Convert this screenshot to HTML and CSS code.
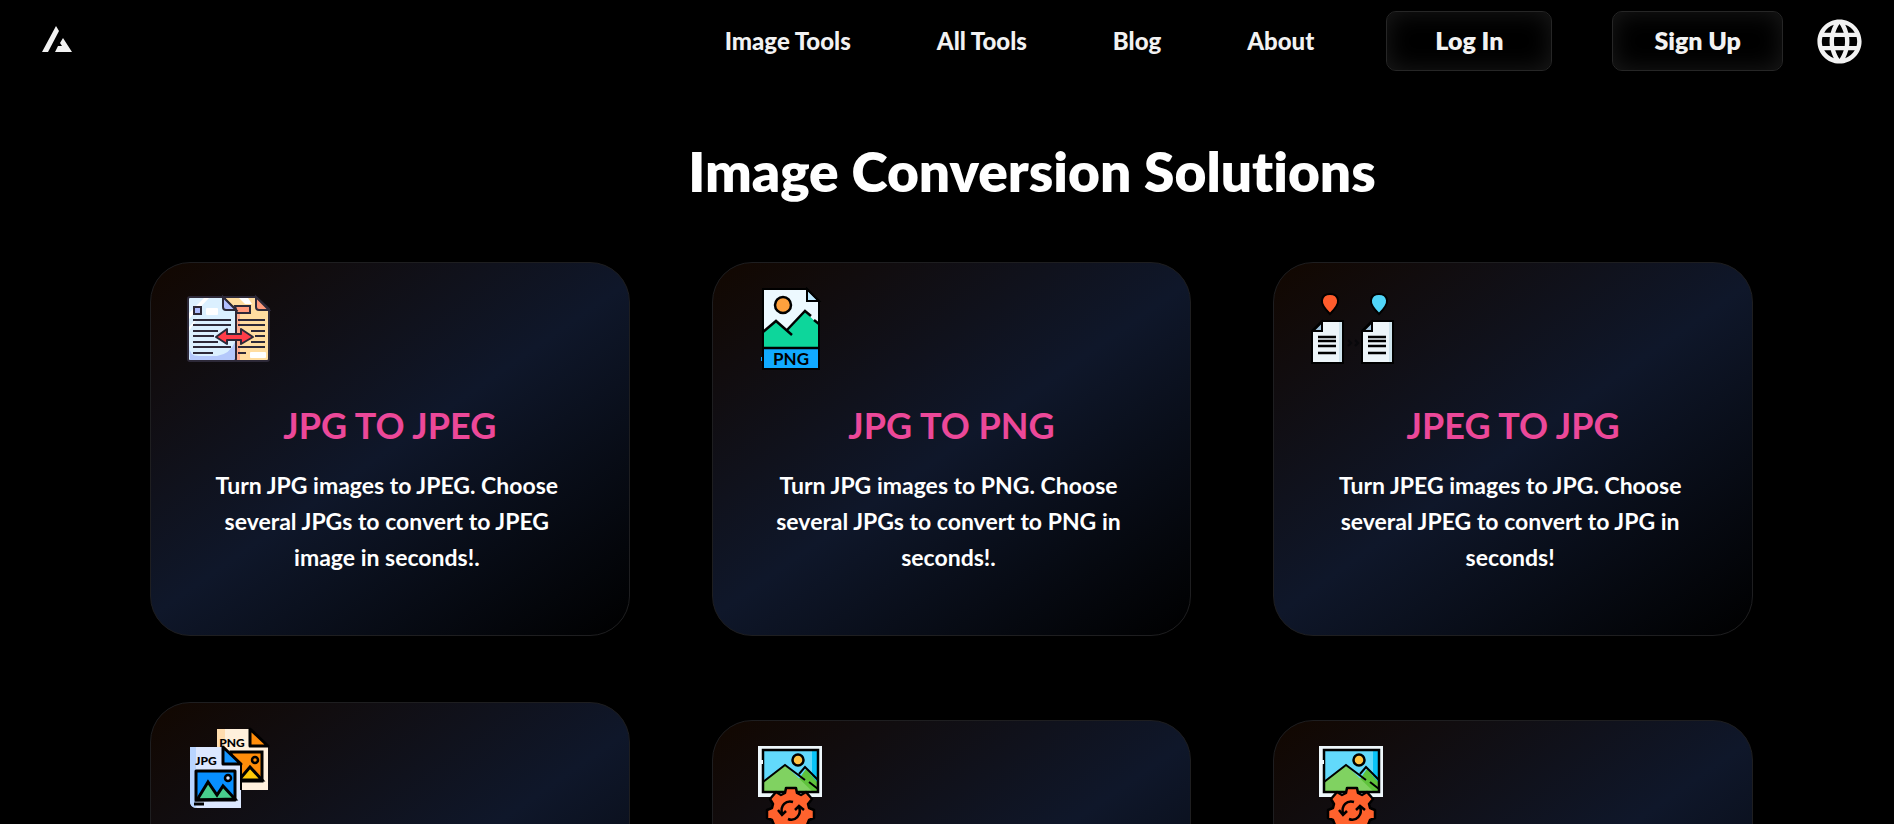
FILE: index.html
```html
<!DOCTYPE html>
<html lang="en">
<head>
<meta charset="UTF-8">
<meta name="viewport" content="width=device-width, initial-scale=1.0">
<title>Image Conversion Solutions</title>
<link rel="stylesheet" href="styles.css">
</head>
<body>

<!-- icons used more than once -->
<svg width="0" height="0" class="sprite">
    <symbol id="compress" viewBox="0 0 84 84">
        <path d="M9 1H73V52H62L9 52Z" fill="#eef7fb"/>
        <rect x="14" y="5" width="55" height="42" fill="#62d9fb"/>
        <path d="M63 5h6v42h-6z" fill="#08c3f8"/>
        <path d="M50 34L57 24L69 38V47H48Z" fill="#5fc33c"/>
        <path d="M14 36L36 20L64 47H14Z" fill="#80d261"/>
        <rect x="14" y="5" width="55" height="42" fill="none" stroke="#000" stroke-width="2.5"/>
        <path d="M14 37L36 20L56 35M60 37L69 44M50 29L56 22L69 35" fill="none" stroke="#000" stroke-width="2"/>
        <circle cx="49" cy="15" r="5.5" fill="#ffc344" stroke="#000" stroke-width="2.5"/>
        <path d="M9 15h5v4H9z" fill="#eef7fb"/>
        <path d="M37 43h10l1 5 4 2 5-3 6 7-4 5 1 4 5 2v8l-5 2-2 5 4 5-6 6-5-3-4 2-1 5H37l-1-5-4-2-5 3-6-6 4-5-2-5-5-2v-8l5-2 1-4-3-5 6-7 5 3 4-2Z" fill="#ff622d" stroke="#000" stroke-width="2.5" stroke-linejoin="round"/>
        <path d="M33 69C31 60 37 55 44 57M50 62C53 70 46 77 39 74" fill="none" stroke="#000" stroke-width="2.5"/>
        <path d="M29 65l4 5 4-4M46 65l4-4 5 4" fill="none" stroke="#000" stroke-width="2.5"/>
    </symbol>
</svg>

<header class="navbar">
    <a href="#" class="logo" aria-label="Home">
        <svg width="30" height="26" viewBox="0 0 30 26" fill="#f2f2f2"><path d="M0 26L14 0L17 5L6 26ZM13 26L16 20L20 20L18 17L21 12L30 26Z"/></svg>
    </a>
    <nav class="nav-links">
        <a href="#">Image Tools</a>
        <a href="#">All Tools</a>
        <a href="#">Blog</a>
        <a href="#">About</a>
    </nav>
    <div class="nav-buttons">
        <button class="btn login">Log In</button>
        <button class="btn">Sign Up</button>
    </div>
    <button class="language" aria-label="Language">
        <svg width="53" height="53" viewBox="0 0 24 24" fill="#f2f2f2"><path d="M11.99 2C6.47 2 2 6.48 2 12s4.47 10 9.99 10C17.52 22 22 17.52 22 12S17.52 2 11.99 2zm6.93 6h-2.95c-.32-1.25-.78-2.45-1.38-3.56 1.84.63 3.37 1.91 4.33 3.56zM12 4.04c.83 1.2 1.48 2.53 1.91 3.96h-3.82c.43-1.43 1.08-2.76 1.91-3.96zM4.26 14C4.1 13.36 4 12.69 4 12s.1-1.36.26-2h3.38c-.08.66-.14 1.32-.14 2s.06 1.34.14 2H4.26zm.82 2h2.95c.32 1.25.78 2.45 1.38 3.56-1.84-.63-3.37-1.9-4.33-3.56zm2.95-8H5.08c.96-1.66 2.49-2.93 4.33-3.56C8.81 5.55 8.35 6.75 8.03 8zM12 19.96c-.83-1.2-1.48-2.53-1.91-3.96h3.82c-.43 1.43-1.08 2.76-1.91 3.96zM14.34 14H9.66c-.09-.66-.16-1.32-.16-2s.07-1.35.16-2h4.68c.09.65.16 1.32.16 2s-.07 1.34-.16 2zm.25 5.56c.6-1.11 1.06-2.31 1.38-3.56h2.95c-.96 1.65-2.49 2.93-4.33 3.56zM16.36 14c.08-.66.14-1.32.14-2s-.06-1.34-.14-2h3.38c.16.64.26 1.31.26 2s-.1 1.36-.26 2h-3.38z"/></svg>
    </button>
</header>

<main>
    <h1>Image Conversion Solutions</h1>
    <div class="cards">
        <div class="card">
            <svg class="icon" viewBox="0 1 84 84">
                <path d="M38 11H69L82 23V73Q82 75 80 75H38Z" fill="#ffdda0" stroke="#2d2938" stroke-width="2"/>
                <path d="M48 23l5 4v47h-5z" fill="#ffac8e"/>
                <path d="M52 12h9l4 6h-7z" fill="#fff"/>
                <path d="M48 20h15v7H50z" fill="#ff9a7b" stroke="#2d2938" stroke-width="2"/>
                <path d="M69 11V21Q69 24 72 24H82Z" fill="#ff9a7b" stroke="#2d2938" stroke-width="2"/>
                <path d="M3 11H36L49 24V73Q49 75 47 75H3Q1 75 1 73V13Q1 11 3 11Z" fill="#dbf0ff"/>
                <path d="M2 60Q2 70 12 70H30Q43 68 48 56V74H3Z" fill="#b4c8fb"/>
                <path d="M2 27L17 12H22L2 33ZM2 41L12 30L2 45Z" fill="#fff"/>
                <path d="M3 11H36L49 24V73Q49 75 47 75H3Q1 75 1 73V13Q1 11 3 11Z" fill="none" stroke="#2d2938" stroke-width="2"/>
                <path d="M36 11V21Q36 24 39 24H49Z" fill="#b2c0ff" stroke="#2d2938" stroke-width="2"/>
                <rect x="7" y="21" width="7" height="7" fill="#aebdff" stroke="#2d2938" stroke-width="2"/>
                <rect x="19" y="22" width="12" height="7" rx="1" fill="#fff"/>
                <path d="M6 34H44M6 39H44M6 45H31M6 50H27M6 56H31M6 61H44M6 67H26M51 34H78M51 39H78M64 45H78M68 50H78M64 56H78M51 61H78M51 67H59" stroke="#2d2938" stroke-width="2"/>
                <rect x="63" y="66" width="16" height="6" rx="1" fill="#fff"/>
                <path d="M29 51L40 43V48H54V43L66 51L54 58V54H40V58Z" fill="#ff3d49" stroke="#2d2938" stroke-width="2" stroke-linejoin="round"/>
            </svg>
            <h2>JPG TO JPEG</h2>
            <p>Turn JPG images to JPEG. Choose several JPGs to convert to JPEG image in seconds!.</p>
        </div>
        <div class="card">
            <svg class="icon" viewBox="0 0 84 84">
                <path d="M14 2H58L70 14V82H14Z" fill="#edf9ff"/>
                <path d="M14 46L27 35L38 44L56 25L70 38V62H14Z" fill="#0dd69b"/>
                <path d="M14 61h56v21H14z" fill="#11aaff"/>
                <path d="M12 70h3v4h-3z" fill="#11aaff"/>
                <path d="M58 2V14H70Z" fill="#bfeaff" stroke="#000" stroke-width="2"/>
                <path d="M14 2H58L70 14V82H14Z" fill="none" stroke="#000" stroke-width="2"/>
                <path d="M14 45L27 34L43 48M38 43L56 24L62 29M65 33L70 37M14 61H70" fill="none" stroke="#000" stroke-width="2.5"/>
                <circle cx="34" cy="18" r="8" fill="#ffa13d" stroke="#000" stroke-width="2.5"/>
                <text x="42" y="78" class="png-label">PNG</text>
            </svg>
            <h2>JPG TO PNG</h2>
            <p>Turn JPG images to PNG. Choose several JPGs to convert to PNG in seconds!.</p>
        </div>
        <div class="card">
            <svg class="icon" viewBox="0 0 84 84">
                <g stroke="#000" stroke-width="2">
                    <path d="M20 27Q11 18 12 13Q13 7 20 7Q27 7 28 13Q29 18 20 27Z" fill="#ff5c2c"/>
                    <path d="M69 27Q60 18 61 13Q62 7 69 7Q76 7 77 13Q78 18 69 27Z" fill="#50d5f8"/>
                </g>
                <g id="sheet">
                    <path d="M12 35H33V76H2V44Z" fill="#edf5f9"/>
                    <path d="M29 35h4v41h-4z" fill="#cfe5ee"/>
                    <path d="M12 35V44H3Z" fill="#9dbfd8" stroke="#000" stroke-width="2"/>
                    <path d="M8 50H26M8 54H26M8 59H26M8 66H26" stroke="#000" stroke-width="2.5"/>
                    <path d="M12 34H33V76H2V44Z" fill="none" stroke="#000" stroke-width="2"/>
                </g>
                <use href="#sheet" x="50"/>
                <path d="M38 53l3 3-3 3M45 53l3 3-3 3" fill="none" stroke="#08080b" stroke-width="2"/>
            </svg>
            <h2>JPEG TO JPG</h2>
            <p>Turn JPEG images to JPG. Choose several JPEG to convert to JPG in seconds!</p>
        </div>
        <div class="card">
            <svg class="icon" viewBox="0 0 84 84">
                <path d="M30 2H64L81 19V63H30Z" fill="#fff0dc"/>
                <path d="M30 2h8v18h-8z" fill="#ffdcae"/>
                <path d="M63 2V19H81Z" fill="#ff8d0a" stroke="#000" stroke-width="3" stroke-linejoin="round"/>
                <text x="45" y="20" class="file-label">PNG</text>
                <rect x="44" y="25" width="31" height="29" fill="#ff8d0a" stroke="#000" stroke-width="3"/>
                <path d="M52 53L63 40L75 53Z" fill="#ffca08" stroke="#000" stroke-width="3"/>
                <circle cx="68" cy="33" r="3" fill="#ff8d0a" stroke="#000" stroke-width="2.5"/>
                <path d="M3 20H36L54 37V81H10Q3 81 3 74Z" fill="#dce8ff"/>
                <path d="M3 20h6v61Q3 80 3 74Z" fill="#b9d5ff"/>
                <path d="M54 37V63" stroke="#000" stroke-width="2"/>
                <path d="M36 20V37H54Z" fill="#1596ff" stroke="#000" stroke-width="3" stroke-linejoin="round"/>
                <text x="19" y="38" class="file-label">JPG</text>
                <rect x="9" y="44" width="39" height="29" fill="#078fff"/>
                <path d="M10 73L21 55L30 68L36 59L48 72Z" fill="#48ce8d" stroke="#000" stroke-width="3"/>
                <rect x="9" y="44" width="39" height="29" fill="none" stroke="#000" stroke-width="3" stroke-linejoin="round"/>
                <circle cx="41" cy="51" r="3" fill="#dce8ff" stroke="#000" stroke-width="2.5"/>
                <path d="M7 77H17" stroke="#000" stroke-width="3"/>
            </svg>
        </div>
        <div class="card lower">
            <svg class="icon"><use href="#compress"/></svg>
        </div>
        <div class="card lower">
            <svg class="icon"><use href="#compress"/></svg>
        </div>
    </div>
</main>

</body>
</html>
```

FILE: styles.css
```css
* {
    box-sizing: border-box;
}
body {
    margin: 0;
    font-family: Lato, "Liberation Sans", sans-serif;
    font-variant-ligatures: none;
    background-color: #000;
    color: #fff;
    height: 100vh;
    overflow: hidden;
}
.sprite {
    position: absolute;
}
.navbar {
    display: flex;
    align-items: center;
    height: 82px;
    padding: 0 28px 0 42px;
}
.logo {
    display: flex;
    margin-right: auto;
    padding-bottom: 4px;
}
.nav-links {
    display: flex;
    gap: 86px;
    margin-right: 72px;
    padding-bottom: 2px;
}
.nav-links a {
    color: #f2f2f2;
    font-size: 24px;
    font-weight: 900;
    text-decoration: none;
}
.nav-buttons {
    display: flex;
    gap: 60px;
    margin-right: 30px;
}
.btn {
    height: 60px;
    padding: 0 41px 2px;
    background-color: #000;
    color: #f2f2f2;
    border: 1px solid #262626;
    border-radius: 10px;
    box-shadow: inset 0 0 24px rgba(255, 255, 255, 0.1);
    font-family: inherit;
    font-size: 25px;
    font-weight: 800;
    cursor: pointer;
}
.login {
    padding: 0 48px 2px;
}
.language {
    display: flex;
    padding: 0;
    background: none;
    border: none;
    cursor: pointer;
}
h1 {
    margin: 55px 0 0;
    padding-left: 170px;
    text-align: center;
    font-size: 55px;
    line-height: 68px;
    font-weight: 800;
}
.cards {
    display: grid;
    grid-template-columns: repeat(3, 1fr);
    gap: 66px 82px;
    margin-top: 57px;
    padding: 0 141px 0 150px;
}
.card {
    min-height: 374px;
    padding: 24px 36px;
    background: linear-gradient(145deg, #120700, #0f172a 50%, #000);
    border: 1px solid #1e1e20;
    border-radius: 40px;
    text-align: center;
}
.lower {
    margin-top: 18px;
}
.icon {
    display: block;
    width: 84px;
    height: 84px;
}
.card h2 {
    margin: 29px 0 0;
    color: #ec4899;
    font-size: 36px;
    line-height: 50px;
    font-weight: 700;
}
.card p {
    margin: 17px 22px 0 16px;
    font-size: 23px;
    line-height: 36px;
    font-weight: 700;
}
.png-label {
    font-size: 17px;
    font-weight: 700;
    text-anchor: middle;
}
.file-label {
    font-size: 12px;
    font-weight: 900;
    text-anchor: middle;
}
```
